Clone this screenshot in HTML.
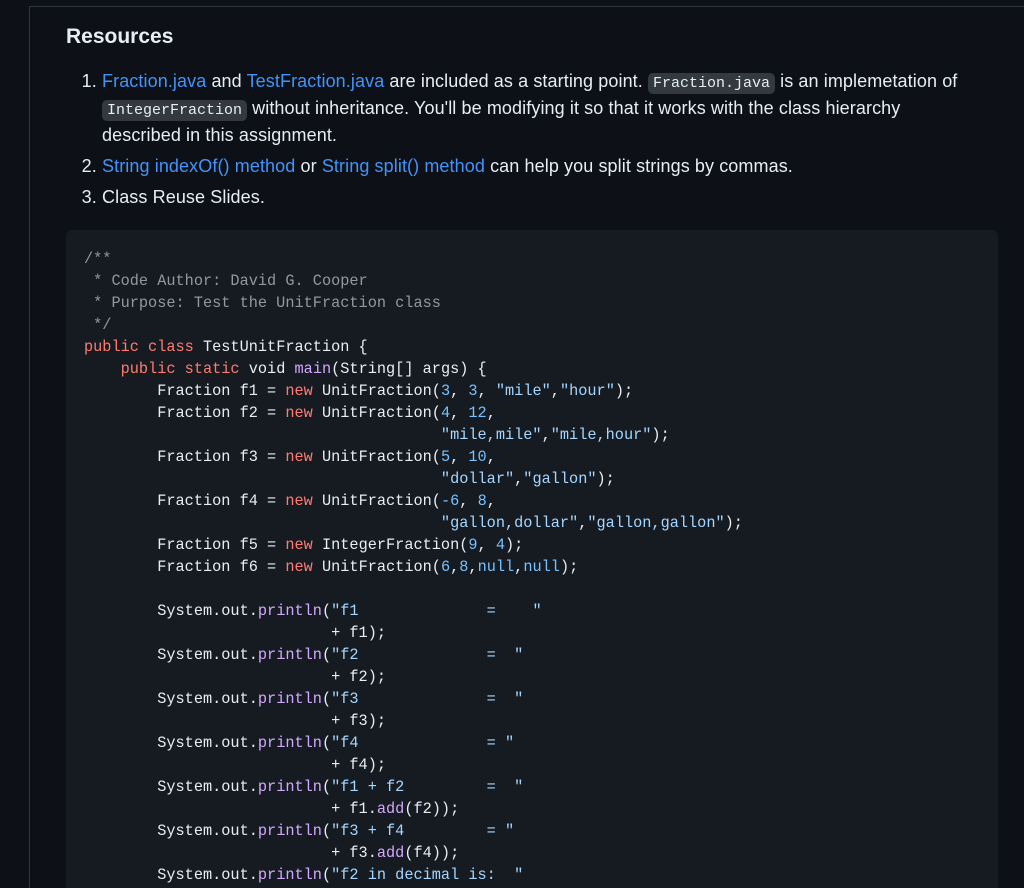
<!DOCTYPE html>
<html><head><meta charset="utf-8"><style>
html,body{margin:0;padding:0;background:#0d1117;width:1024px;height:888px;overflow:hidden;position:relative}
.frame{position:absolute;left:29px;top:6px;right:0;bottom:0;border-left:1px solid #30363d;border-top:1px solid #30363d}
h2{position:absolute;left:66px;top:22px;margin:0;font:600 21px/30px "Liberation Sans",sans-serif;color:#e6edf3}
ol{position:absolute;left:66px;top:68px;width:865px;margin:0;padding-left:36px;font:18px/27px "Liberation Sans",sans-serif;color:#e6edf3;letter-spacing:0.1px}
li{margin-bottom:4px}
a{color:#4493f8;text-decoration:none}
code{font:15px "Liberation Mono",monospace;background:#343941;border-radius:5px;padding:2px 5px;letter-spacing:0}
pre{position:absolute;left:66px;top:230px;width:932px;height:700px;margin:0;background:#161b22;border-radius:6px;box-sizing:border-box;padding:18px 18px;font:15.25px/22px "Liberation Mono",monospace;color:#e6edf3}
.c{color:#9198a1}.k{color:#ff7b72}.f{color:#d2a8ff}.n{color:#79c0ff}.s{color:#a5d6ff}
</style></head><body>
<div class="frame"></div>
<h2>Resources</h2>
<ol>
<li><a>Fraction.java</a> and <a>TestFraction.java</a> are included as a starting point. <code>Fraction.java</code> is an implemetation of <code>IntegerFraction</code> without inheritance. You'll be modifying it so that it works with the class hierarchy described in this assignment.</li>
<li><a>String indexOf() method</a> or <a>String split() method</a> can help you split strings by commas.</li>
<li>Class Reuse Slides.</li>
</ol>
<pre><span class="c">/**
 * Code Author: David G. Cooper
 * Purpose: Test the UnitFraction class
 */</span>
<span class="k">public class</span> TestUnitFraction {
    <span class="k">public static</span> void <span class="f">main</span>(String[] args) {
        Fraction f1 = <span class="k">new</span> UnitFraction(<span class="n">3</span>, <span class="n">3</span>, <span class="s">"mile"</span>,<span class="s">"hour"</span>);
        Fraction f2 = <span class="k">new</span> UnitFraction(<span class="n">4</span>, <span class="n">12</span>,
                                       <span class="s">"mile,mile"</span>,<span class="s">"mile,hour"</span>);
        Fraction f3 = <span class="k">new</span> UnitFraction(<span class="n">5</span>, <span class="n">10</span>,
                                       <span class="s">"dollar"</span>,<span class="s">"gallon"</span>);
        Fraction f4 = <span class="k">new</span> UnitFraction(<span class="n">-6</span>, <span class="n">8</span>,
                                       <span class="s">"gallon,dollar"</span>,<span class="s">"gallon,gallon"</span>);
        Fraction f5 = <span class="k">new</span> IntegerFraction(<span class="n">9</span>, <span class="n">4</span>);
        Fraction f6 = <span class="k">new</span> UnitFraction(<span class="n">6</span>,<span class="n">8</span>,<span class="n">null</span>,<span class="n">null</span>);

        System.out.<span class="f">println</span>(<span class="s">"f1              =    "</span>
                           + f1);
        System.out.<span class="f">println</span>(<span class="s">"f2              =  "</span>
                           + f2);
        System.out.<span class="f">println</span>(<span class="s">"f3              =  "</span>
                           + f3);
        System.out.<span class="f">println</span>(<span class="s">"f4              = "</span>
                           + f4);
        System.out.<span class="f">println</span>(<span class="s">"f1 + f2         =  "</span>
                           + f1.<span class="f">add</span>(f2));
        System.out.<span class="f">println</span>(<span class="s">"f3 + f4         = "</span>
                           + f3.<span class="f">add</span>(f4));
        System.out.<span class="f">println</span>(<span class="s">"f2 in decimal is:  "</span>
</pre>
</body></html>
